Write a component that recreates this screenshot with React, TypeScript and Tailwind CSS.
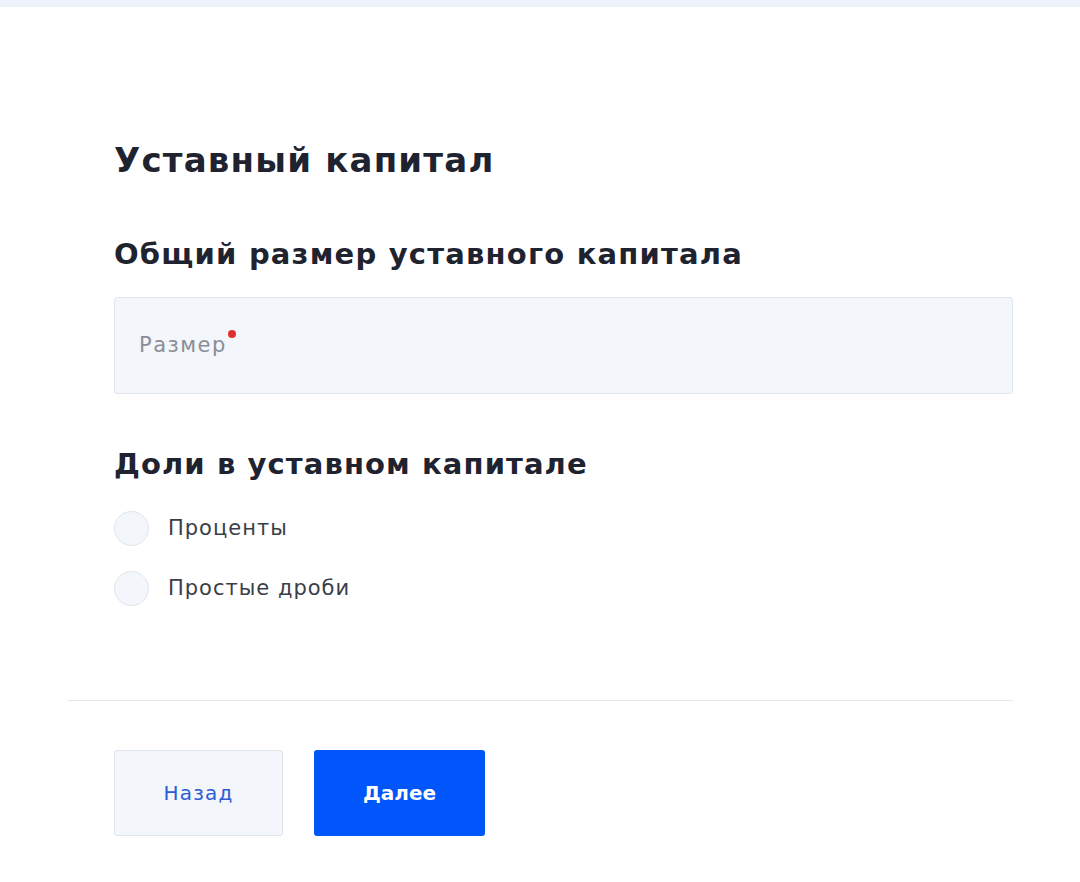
export default function App() {
  return (
    <div className="min-h-[882px] bg-white font-['DejaVu_Sans','Noto_Sans',sans-serif] text-[#1f2330]">
      <div className="h-[7px] bg-[#ecf3fb]" />

      <div className="w-[945px] ml-[68px]">
        <div className="pl-[46px] pt-[127px]">
          <h1 className="text-[34px] font-bold leading-[52px] tracking-[1.2px]">Уставный капитал</h1>

          <h2 className="mt-[48px] text-[29px] font-bold leading-[40px] tracking-[1.2px]">
            Общий размер уставного капитала
          </h2>

          <div className="mt-[23px] h-[97px] flex items-center pl-[24px] bg-[#f3f6fb] border border-[#e1e5ec] rounded-[3px]">
            <span className="text-[21px] tracking-[1.5px] text-[#8a8e96]">Размер</span>
            <span className="self-start mt-[32px] ml-[1px] w-[8px] h-[8px] rounded-full bg-[#e0302e]" />
          </div>

          <h2 className="mt-[50px] text-[29px] font-bold leading-[40px] tracking-[1.1px]">
            Доли в уставном капитале
          </h2>

          <div className="mt-[27px] flex flex-col gap-[25px]">
            {["Проценты", "Простые дроби"].map((label) => (
              <label key={label} className="flex items-center gap-[19px]">
                <span className="w-[35px] h-[35px] rounded-full bg-[#f3f6fb] border border-[#e1e5ec]" />
                <span className="text-[21px] tracking-[1px] text-[#3a3e47]">{label}</span>
              </label>
            ))}
          </div>
        </div>

        <div className="mt-[94px] border-t border-[#e6e8ec]" />

        <div className="pl-[46px] pt-[49px] flex gap-[31px]">
          <button className="w-[169px] h-[86px] bg-[#f3f6fb] border border-[#e1e5ec] rounded-[3px] text-[20px] tracking-[1.2px] text-[#2c5bd6]">
            Назад
          </button>
          <button className="w-[171px] h-[86px] bg-[#0055fb] rounded-[3px] text-[20px] font-bold text-white">
            Далее
          </button>
        </div>
      </div>
    </div>
  )
}
